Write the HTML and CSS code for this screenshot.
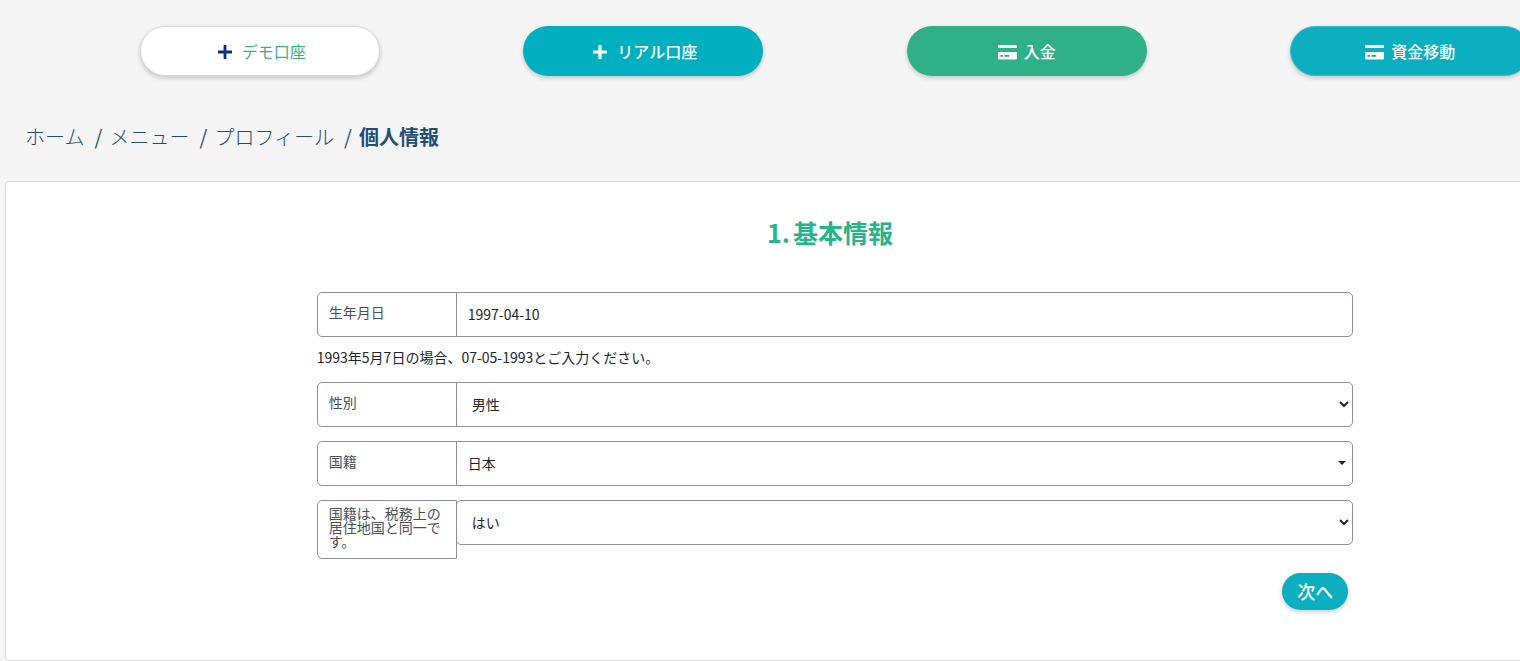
FILE: index.html
```html
<!DOCTYPE html>
<html lang="ja">
<head>
<meta charset="utf-8">
<meta name="viewport" content="width=device-width, initial-scale=1">
<title>個人情報</title>
<link rel="stylesheet" href="styles.css">
</head>

<body>
<div class="wrapper">

	<div class="top-buttons">
		<div class="col">
			<button type="button" class="btn-top btn-demo">
				<svg class="icon-plus" viewBox="0 0 14 14" aria-hidden="true"><path d="M5.6 0h2.8v5.6H14v2.8H8.4V14H5.6V8.4H0V5.6h5.6z" fill="currentColor"/></svg>
				<span>デモ口座</span>
			</button>
		</div>
		<div class="col">
			<button type="button" class="btn-top btn-real">
				<svg class="icon-plus" viewBox="0 0 14 14" aria-hidden="true"><path d="M6 0h2q.6 0 .6.6v4.8h4.8q.6 0 .6.6v2q0 .6-.6.6H8.6v4.8q0 .6-.6.6H6q-.6 0-.6-.6V8.6H.6Q0 8.6 0 8V6q0-.6.6-.6h4.8V.6Q5.4 0 6 0z" fill="currentColor"/></svg>
				<span>リアル口座</span>
			</button>
		</div>
		<div class="col">
			<button type="button" class="btn-top btn-deposit">
				<svg class="icon-card" viewBox="0 0 19 15" aria-hidden="true"><path fill-rule="evenodd" d="M1 0h17Q19 0 19 1V3H0V1Q0 0 1 0zM0 7h19v6.2q0 1.2-1.2 1.2H1.2Q0 14.4 0 13.2zM2.4 10v1.8h2.6v-1.8zM6.4 10v1.8h4.8v-1.8z" fill="currentColor"/></svg>
				<span>入金</span>
			</button>
		</div>
		<div class="col">
			<button type="button" class="btn-top btn-transfer">
				<svg class="icon-card" viewBox="0 0 19 15" aria-hidden="true"><path fill-rule="evenodd" d="M1 0h17Q19 0 19 1V3H0V1Q0 0 1 0zM0 7h19v6.2q0 1.2-1.2 1.2H1.2Q0 14.4 0 13.2zM2.4 10v1.8h2.6v-1.8zM6.4 10v1.8h4.8v-1.8z" fill="currentColor"/></svg>
				<span>資金移動</span>
			</button>
		</div>
	</div>

	<nav class="breadcrumb">
		<a href="#">ホーム</a>
		<span class="sep">/</span>
		<a href="#">メニュー</a>
		<span class="sep">/</span>
		<a href="#">プロフィール</a>
		<span class="sep">/</span>
		<strong>個人情報</strong>
	</nav>

	<div class="card">
		<h1><span class="step">1.</span>基本情報</h1>
		<form class="profile-form">
			<div class="input-group">
				<label for="birthday">生年月日</label>
				<input type="text" id="birthday" name="birthday" value="1997-04-10">
			</div>
			<p class="help">1993年5月7日の場合、07-05-1993とご入力ください。</p>

			<div class="input-group">
				<label for="gender">性別</label>
				<select id="gender" name="gender">
					<option>男性</option>
					<option>女性</option>
				</select>
			</div>

			<div class="input-group">
				<label for="nationality">国籍</label>
				<div class="picker">
					<select id="nationality" name="nationality">
						<option>日本</option>
					</select>
				</div>
			</div>

			<div class="input-group group-tax">
				<label for="tax">国籍は、税務上の居住地国と同一です。</label>
				<select id="tax" name="tax">
					<option>はい</option>
					<option>いいえ</option>
				</select>
			</div>

			<div class="actions">
				<button type="submit" class="btn-next">次へ</button>
			</div>
		</form>
	</div>

</div>
</body>
</html>
```
FILE: styles.css
```css
* {
	box-sizing: border-box;
}
body {
	margin: 0;
	background-color: #f5f5f5;
	color: #212529;
	font-family: "Noto Sans CJK JP", "Noto Sans", sans-serif;
	font-size: 14px;
	overflow-x: hidden;
}
button, input, select {
	font-family: inherit;
}
/* content is wider than the window, the right side runs off */
.wrapper {
	width: calc(100% + 135px);
	padding-left: 5px;
}

/* top buttons */
.top-buttons {
	display: flex;
	padding: 26px 53px 0 63px;
}
.col {
	flex: 1;
	display: flex;
	justify-content: center;
}
.btn-top {
	display: flex;
	align-items: center;
	justify-content: center;
	width: 240px;
	height: 50px;
	border: 1px solid transparent;
	border-radius: 25px;
	color: #fff;
	font-size: 16px;
	font-weight: 500;
	line-height: 24px;
	box-shadow: 0 2px 5px rgba(0, 0, 0, 0.2);
	cursor: pointer;
}
.btn-demo {
	background-color: #fff;
	border-color: #d8d8d8;
	color: #3fae85;
	font-weight: 400;
}
.btn-demo .icon-plus {
	color: #0a2f7c;
}
.btn-real {
	background-color: #00afc0;
}
.btn-deposit {
	background-color: #30b086;
}
.btn-transfer {
	background-color: #0cafbf;
	border-color: #3fbdc9;
}
.icon-plus {
	width: 14px;
	height: 14px;
	margin: 2px 10px 0 4px;
}
.icon-card {
	width: 19px;
	height: 15px;
	margin: 2px 7px 0 0;
}

/* breadcrumb */
.breadcrumb {
	display: flex;
	align-items: center;
	padding: 46px 20px 29px;
	color: #1f4e79;
	font-size: 20px;
	line-height: 30px;
}
.breadcrumb a {
	color: #1f4e79;
	font-weight: 300;
	text-decoration: none;
}
.breadcrumb .sep {
	width: 8px;
	margin: 0 7px 0 10px;
	text-align: center;
}

/* card */
.card {
	padding: 31px 0 50px;
	background-color: #fff;
	border: 1px solid #d6d8da;
	border-radius: 4px;
}
h1 {
	margin: 0 0 41px;
	color: #28b48a;
	font-size: 25px;
	font-weight: 700;
	line-height: 38px;
	text-align: center;
}
.step {
	margin-right: 3px;
}
.profile-form {
	width: 63.5%;
	margin: 0 auto;
	padding-left: 10px;
}
.input-group {
	display: flex;
	align-items: flex-start;
	margin-bottom: 14px;
}
.input-group label {
	flex: none;
	width: 140px;
	min-height: 45px;
	padding: 12px 11px;
	border: 1px solid #8f8f94;
	border-radius: 5px 0 0 5px;
	color: #495057;
	line-height: 14px;
}
.input-group input,
.input-group select {
	flex: 1;
	min-width: 0;
	height: 45px;
	margin-left: -1px;
	padding: 0 11px 2px;
	background-color: #fff;
	border: 1px solid #8f8f94;
	border-radius: 0 5px 5px 0;
	color: #212529;
	font-size: 14px;
}
.input-group select {
	padding-right: 0;
}
.picker {
	flex: 1;
	position: relative;
	display: flex;
}
.picker select {
	appearance: none;
}
.picker::after {
	content: "";
	position: absolute;
	top: 20px;
	right: 7px;
	border: 4px solid transparent;
	border-top-color: #212529;
	border-bottom: 0;
	pointer-events: none;
}
.help {
	margin: 0 0 18px;
	line-height: 13px;
}
.group-tax label {
	padding: 5px 11px 10px;
}
.input-group.group-tax select {
	border-radius: 5px;
}
.actions {
	display: flex;
	justify-content: flex-end;
	padding-right: 5px;
}
.btn-next {
	width: 66px;
	height: 37px;
	padding: 0 0 2px;
	background-color: #0cafbf;
	border: 0;
	border-radius: 19px;
	color: #fff;
	font-size: 18px;
	font-weight: 500;
	box-shadow: 0 2px 5px rgba(0, 0, 0, 0.2);
	cursor: pointer;
}
```
